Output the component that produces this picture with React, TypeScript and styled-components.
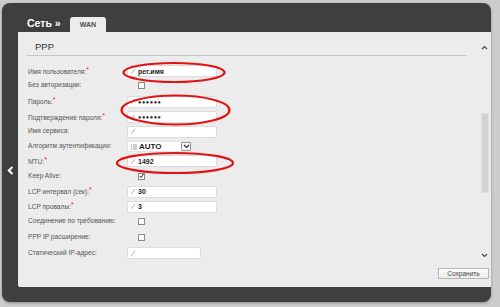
import React from "react";
import styled, { createGlobalStyle } from "styled-components";

const GlobalStyle = createGlobalStyle`
  html, body { margin: 0; padding: 0; }
  body {
    background: #cdcdcd;
    font-family: "Liberation Sans", Arial, sans-serif;
  }
`;

const Page = styled.div`
  position: relative;
  width: 500px;
  height: 307px;
  box-sizing: border-box;
  padding: 3px 9px 5px 2px;
  background: #cdcdcd;
`;

const Frame = styled.div`
  width: 489px;
  height: 299px;
  box-sizing: border-box;
  background: #3f3f3f;
  border-radius: 8px;
  display: grid;
  grid-template-columns: 16px 1fr;
  grid-template-rows: 29px 1fr;
  padding-bottom: 15px;
  box-shadow: 0 1px 3px rgba(0,0,0,0.35);
`;

const Header = styled.div`
  grid-column: 1 / span 2;
  display: flex;
  align-items: flex-end;
  padding-left: 25px;
`;

const Title = styled.div`
  color: #fff;
  font-weight: bold;
  font-size: 10.5px;
  line-height: 12px;
  margin-bottom: 3px;
  width: 43px;
`;

const Tab = styled.div`
  width: 36px;
  height: 15px;
  background: #ececec;
  border-radius: 3px 3px 0 0;
  color: #4a4a4a;
  font-weight: bold;
  font-size: 7px;
  display: flex;
  align-items: center;
  justify-content: center;
  padding-bottom: 1px;
  box-sizing: border-box;
`;

const Side = styled.div`
  display: flex;
  justify-content: center;
  padding-top: 134px;
`;

const Panel = styled.div`
  background: #ececec;
  display: grid;
  grid-template-rows: 1fr 25px;
  border-radius: 0 0 0 2px;
`;

const Main = styled.div`
  display: grid;
  grid-template-columns: 1fr 13px;
`;

const Content = styled.div`
  padding-left: 9px;
  display: flex;
  flex-direction: column;
`;

const Section = styled.div`
  width: 440px;
  height: 24px;
  box-sizing: border-box;
  border-bottom: 1px solid #c6c6c6;
  display: flex;
  align-items: flex-end;
  padding: 0 0 3px 8px;
  font-size: 9.5px;
  color: #333;
  margin-bottom: 8px;
`;

const Row = styled.div<{ $h: number }>`
  height: ${(p) => p.$h}px;
  display: flex;
  align-items: center;
`;

const Label = styled.div`
  width: 100px;
  padding-left: 1px;
  box-sizing: border-box;
  font-size: 6.6px;
  color: #555;
  white-space: nowrap;
  margin-top: -2px;
`;

const Req = styled.span`
  color: #e02020;
  font-size: 7px;
  vertical-align: 2px;
`;

const Input = styled.div<{ $w?: number }>`
  width: ${(p) => p.$w ?? 90}px;
  height: 12px;
  box-sizing: border-box;
  background: #fff;
  border: 1px solid #dcdcdc;
  border-radius: 2px;
  display: flex;
  align-items: center;
  padding-left: 2px;
  gap: 2px;
  font-size: 7px;
  font-weight: bold;
  color: #222;
`;

const Dots = styled.span`
  font-size: 5.5px;
  letter-spacing: 0.6px;
`;

const Check = styled.div`
  width: 7px;
  height: 7px;
  margin-left: 11px;
  box-sizing: border-box;
  background: #fff;
  border: 1px solid #8a8a8a;
  display: flex;
  align-items: center;
  justify-content: center;
`;

const Select = styled.div`
  width: 65px;
  height: 11px;
  box-sizing: border-box;
  display: flex;
  align-items: center;
  padding-left: 3px;
  gap: 2px;
  font-size: 8px;
  font-weight: bold;
  color: #222;
  background: #fff;
  border: 1px solid #e4e4e4;
`;

const SelectText = styled.span`
  flex: 1;
`;

const DropBtn = styled.div`
  width: 10px;
  height: 9px;
  box-sizing: border-box;
  border: 1px solid #9a9a9a;
  border-radius: 1px;
  background: #f4f4f4;
  display: flex;
  align-items: center;
  justify-content: center;
`;

const Scroll = styled.div`
  display: flex;
  flex-direction: column;
  align-items: center;
  padding: 13px 0 4px;
`;

const Thumb = styled.div`
  width: 8px;
  height: 80px;
  margin-top: 63px;
  background: #d2d2d2;
  border: 1px solid #e0e0e0;
  box-sizing: border-box;
`;

const Spacer = styled.div`
  flex: 1;
`;

const Footer = styled.div`
  display: flex;
  justify-content: flex-end;
  align-items: flex-start;
  padding: 6px 2px 0 0;
`;

const Button = styled.div`
  width: 51px;
  height: 11px;
  box-sizing: border-box;
  border: 1px solid #b8b8b8;
  background: linear-gradient(#fbfbfb, #ececec);
  font-size: 6.5px;
  color: #444;
  display: flex;
  align-items: center;
  justify-content: center;
`;

const Overlay = styled.svg`
  position: absolute;
  left: 0;
  top: 0;
  pointer-events: none;
`;

const Pencil = () => (
  <svg width="6" height="7" viewBox="0 0 6 7">
    <path d="M0.8 6.4 L1.2 5 L4.8 0.8 L5.4 1.4 L1.8 5.6 Z" fill="#b5b5b5" />
  </svg>
);

const Chevron = ({ up, color = "#444" }: { up?: boolean; color?: string }) => (
  <svg width="7" height="5" viewBox="0 0 7 5">
    <path
      d={up ? "M1 4 L3.5 1.5 L6 4" : "M1 1 L3.5 3.5 L6 1"}
      fill="none"
      stroke={color}
      strokeWidth="1.2"
    />
  </svg>
);

const ListIcon = () => (
  <svg width="6" height="6" viewBox="0 0 6 6">
    {[0.5, 2.5, 4.5].map((y) => (
      <g key={y}>
        <rect x="0" y={y} width="1" height="1" fill="#888" />
        <rect x="2" y={y} width="4" height="1" fill="#999" />
      </g>
    ))}
  </svg>
);

const Tick = () => (
  <svg width="6" height="6" viewBox="0 0 6 6">
    <path d="M0.8 3 L2.4 4.8 L5.4 0.6" fill="none" stroke="#222" strokeWidth="1.2" />
  </svg>
);

const BackArrow = () => (
  <svg width="7" height="9" viewBox="0 0 7 9">
    <path d="M5.5 1 L1.8 4.5 L5.5 8" fill="none" stroke="#fff" strokeWidth="2" />
  </svg>
);

type Field = { label: string; req?: boolean; h: number; control: React.ReactNode };

const Text = ({ v, w }: { v?: React.ReactNode; w?: number }) => (
  <Input $w={w}>
    <Pencil />
    {v}
  </Input>
);

const fields: Field[] = [
  { label: "Имя пользователя:", req: true, h: 14, control: <Text v="рег.имя" /> },
  { label: "Без авторизации:", h: 15, control: <Check /> },
  { label: "Пароль:", req: true, h: 17, control: <Text v={<Dots>●●●●●●</Dots>} /> },
  { label: "Подтверждение пароля:", req: true, h: 14, control: <Text v={<Dots>●●●●●●</Dots>} /> },
  { label: "Имя сервиса:", h: 15, control: <Text /> },
  {
    label: "Алгоритм аутентификации:",
    h: 15,
    control: (
      <Select>
        <ListIcon />
        <SelectText>AUTO</SelectText>
        <DropBtn>
          <Chevron color="#333" />
        </DropBtn>
      </Select>
    ),
  },
  { label: "MTU:", req: true, h: 14, control: <Text v="1492" /> },
  {
    label: "Keep Alive:",
    h: 16,
    control: (
      <Check>
        <Tick />
      </Check>
    ),
  },
  { label: "LCP интервал (сек):", req: true, h: 15, control: <Text v="30" /> },
  { label: "LCP провалы:", req: true, h: 15, control: <Text v="3" /> },
  { label: "Соединение по требованию:", h: 15, control: <Check /> },
  { label: "PPP IP расширение:", h: 16, control: <Check /> },
  { label: "Статический IP-адрес:", h: 16, control: <Text w={74} /> },
];

export default function App() {
  return (
    <>
      <GlobalStyle />
      <Page>
        <Frame>
          <Header>
            <Title>Сеть »</Title>
            <Tab>WAN</Tab>
          </Header>
          <Side>
            <BackArrow />
          </Side>
          <Panel>
            <Main>
              <Content>
                <Section>PPP</Section>
                {fields.map((f) => (
                  <Row key={f.label} $h={f.h}>
                    <Label>
                      {f.label}
                      {f.req && <Req>*</Req>}
                    </Label>
                    {f.control}
                  </Row>
                ))}
              </Content>
              <Scroll>
                <Chevron up />
                <Thumb />
                <Spacer />
                <Chevron />
              </Scroll>
            </Main>
            <Footer>
              <Button>Сохранить</Button>
            </Footer>
          </Panel>
        </Frame>
        <Overlay width="500" height="307" viewBox="0 0 500 307">
          <g fill="none" stroke="#e01414" strokeWidth="2.2">
            <ellipse cx="174" cy="72.5" rx="50.5" ry="9.5" />
            <ellipse cx="175.5" cy="110" rx="54" ry="14.5" />
            <ellipse cx="175" cy="163" rx="58" ry="10" />
          </g>
        </Overlay>
      </Page>
    </>
  );
}
